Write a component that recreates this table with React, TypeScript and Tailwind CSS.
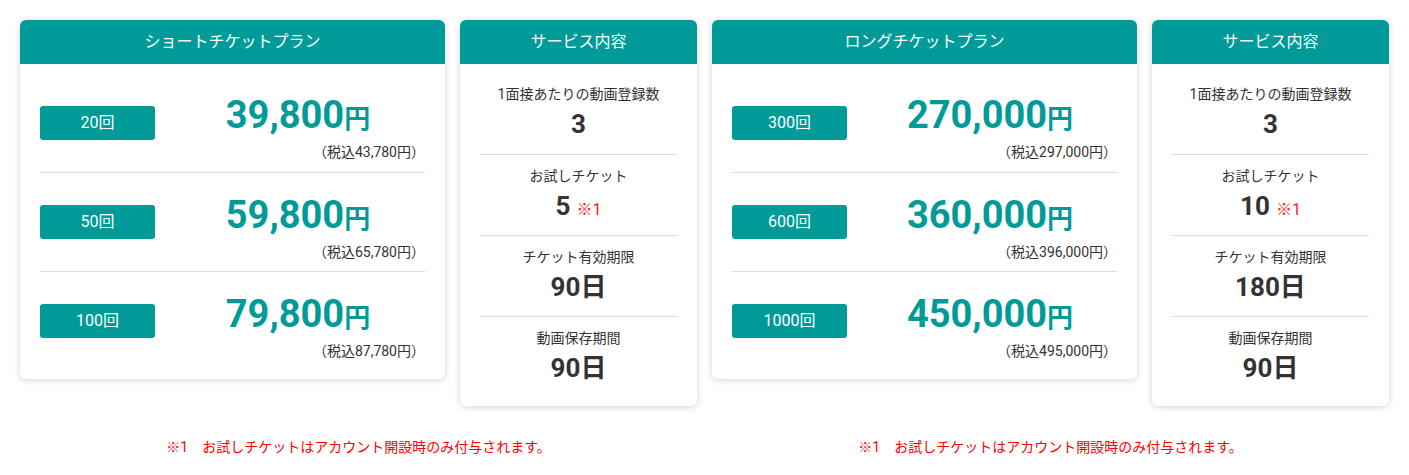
type Plan = { count: string; price: string; tax: string };

const shortPlans: Plan[] = [
  { count: "20回", price: "39,800", tax: "（税込43,780円）" },
  { count: "50回", price: "59,800", tax: "（税込65,780円）" },
  { count: "100回", price: "79,800", tax: "（税込87,780円）" },
];

const longPlans: Plan[] = [
  { count: "300回", price: "270,000", tax: "（税込297,000円）" },
  { count: "600回", price: "360,000", tax: "（税込396,000円）" },
  { count: "1000回", price: "450,000", tax: "（税込495,000円）" },
];

function PlanCard({ title, plans }: { title: string; plans: Plan[] }) {
  return (
    <div className="w-[425px] bg-white rounded-md overflow-hidden shadow-[0_1px_7px_rgba(0,0,0,0.18)]">
      <div className="h-[44px] bg-[#009b99] flex items-center justify-center text-white text-[16px]">{title}</div>
      <div className="px-5 py-[9px]">
        {plans.map((p, i) => (
          <div
            key={p.count}
            className={`h-[99px] flex items-center ${i > 0 ? "border-t border-[#dcdcdc]" : ""}`}
          >
            <div className="w-[115px] h-[34px] rounded-[3px] bg-[#009b99] text-white text-[16px] flex items-center justify-center">
              {p.count}
            </div>
            <div className="flex-1 pl-[16px] pt-[9px] flex flex-col">
              <div className="text-center text-[#009b99] font-bold leading-[46px]">
                <span className="text-[38px]">{p.price}</span>
                <span className="text-[26px]">円</span>
              </div>
              <div className="text-right text-[14px] leading-5 text-[#333] -mt-[4px]">{p.tax}</div>
            </div>
          </div>
        ))}
      </div>
    </div>
  );
}

type Item = { label: string; value: string; note?: boolean };

function ServiceCard({ items }: { items: Item[] }) {
  return (
    <div className="w-[237px] bg-white rounded-md overflow-hidden shadow-[0_1px_7px_rgba(0,0,0,0.18)]">
      <div className="h-[44px] bg-[#009b99] flex items-center justify-center text-white text-[16px]">サービス内容</div>
      <div className="px-5 py-[9px]">
        {items.map((it, i) => (
          <div
            key={it.label}
            className={`h-[81px] pt-[11px] text-center text-[#333] ${i > 0 ? "border-t border-[#dcdcdc]" : ""}`}
          >
            <div className="text-[14px] leading-5">{it.label}</div>
            <div className="mt-[5px] leading-[30px]">
              <span className="text-[26px] font-bold">{it.value}</span>
              {it.note && <span className="ml-[6px] text-[16px] text-[#ff1a1a]">※1</span>}
            </div>
          </div>
        ))}
      </div>
    </div>
  );
}

function Group({ title, plans, items }: { title: string; plans: Plan[]; items: Item[] }) {
  return (
    <div className="flex flex-col">
      <div className="flex items-start gap-[15px]">
        <PlanCard title={title} plans={plans} />
        <ServiceCard items={items} />
      </div>
      <p className="mt-[31px] text-center text-[14px] leading-5 text-[#ff0000]">
        ※1　お試しチケットはアカウント開設時のみ付与されます。
      </p>
    </div>
  );
}

export default function App() {
  return (
    <div className="min-h-screen bg-white px-5 pt-5 font-['Roboto','Noto_Sans_CJK_JP',sans-serif]">
      <div className="flex gap-[15px] items-start">
        <Group
          title="ショートチケットプラン"
          plans={shortPlans}
          items={[
            { label: "1面接あたりの動画登録数", value: "3" },
            { label: "お試しチケット", value: "5", note: true },
            { label: "チケット有効期限", value: "90日" },
            { label: "動画保存期間", value: "90日" },
          ]}
        />
        <Group
          title="ロングチケットプラン"
          plans={longPlans}
          items={[
            { label: "1面接あたりの動画登録数", value: "3" },
            { label: "お試しチケット", value: "10", note: true },
            { label: "チケット有効期限", value: "180日" },
            { label: "動画保存期間", value: "90日" },
          ]}
        />
      </div>
    </div>
  );
}
